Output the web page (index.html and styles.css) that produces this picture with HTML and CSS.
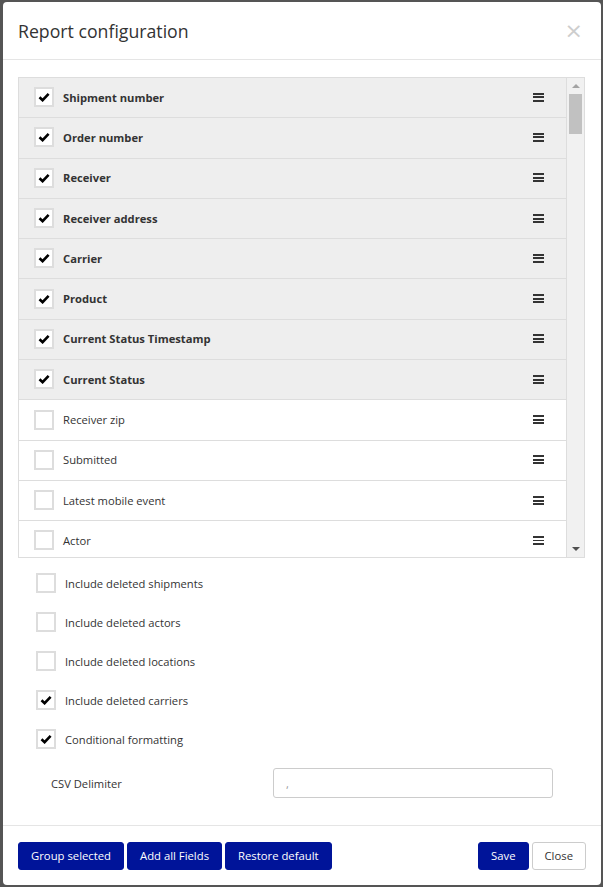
FILE: index.html
```html
<html>
  <head>
    <link rel="stylesheet" href="styles.css">
  </head>
  <body>
    <div class='modal'>
      <div class='modal-header'>
        <h4>Report configuration</h4>
        <span class='close-x'>&times;</span>
      </div>
      <div class='modal-body'>
        <div class='field-box'>
          <div class='field-list'>
            <div class='field-row checked'><span class='cb on'><svg viewBox='0 0 12 10'><path d='M1.5 5.2 L4.6 8.2 L10.6 1.8'/></svg></span><span class='name'>Shipment number</span><span class='handle'></span></div>
            <div class='field-row checked'><span class='cb on'><svg viewBox='0 0 12 10'><path d='M1.5 5.2 L4.6 8.2 L10.6 1.8'/></svg></span><span class='name'>Order number</span><span class='handle'></span></div>
            <div class='field-row checked'><span class='cb on'><svg viewBox='0 0 12 10'><path d='M1.5 5.2 L4.6 8.2 L10.6 1.8'/></svg></span><span class='name'>Receiver</span><span class='handle'></span></div>
            <div class='field-row checked'><span class='cb on'><svg viewBox='0 0 12 10'><path d='M1.5 5.2 L4.6 8.2 L10.6 1.8'/></svg></span><span class='name'>Receiver address</span><span class='handle'></span></div>
            <div class='field-row checked'><span class='cb on'><svg viewBox='0 0 12 10'><path d='M1.5 5.2 L4.6 8.2 L10.6 1.8'/></svg></span><span class='name'>Carrier</span><span class='handle'></span></div>
            <div class='field-row checked'><span class='cb on'><svg viewBox='0 0 12 10'><path d='M1.5 5.2 L4.6 8.2 L10.6 1.8'/></svg></span><span class='name'>Product</span><span class='handle'></span></div>
            <div class='field-row checked'><span class='cb on'><svg viewBox='0 0 12 10'><path d='M1.5 5.2 L4.6 8.2 L10.6 1.8'/></svg></span><span class='name'>Current Status Timestamp</span><span class='handle'></span></div>
            <div class='field-row checked'><span class='cb on'><svg viewBox='0 0 12 10'><path d='M1.5 5.2 L4.6 8.2 L10.6 1.8'/></svg></span><span class='name'>Current Status</span><span class='handle'></span></div>
            <div class='field-row'><span class='cb'></span><span class='name'>Receiver zip</span><span class='handle'></span></div>
            <div class='field-row'><span class='cb'></span><span class='name'>Submitted</span><span class='handle'></span></div>
            <div class='field-row'><span class='cb'></span><span class='name'>Latest mobile event</span><span class='handle'></span></div>
            <div class='field-row'><span class='cb'></span><span class='name'>Actor</span><span class='handle'></span></div>
          </div>
          <div class='scrollbar'>
            <span class='arrow up'></span>
            <div class='track'><div class='thumb'></div></div>
            <span class='arrow down'></span>
          </div>
        </div>
        <div class='options'>
          <div class='option'><span class='cb'></span>Include deleted shipments</div>
          <div class='option'><span class='cb'></span>Include deleted actors</div>
          <div class='option'><span class='cb'></span>Include deleted locations</div>
          <div class='option'><span class='cb on'><svg viewBox='0 0 12 10'><path d='M1.5 5.2 L4.6 8.2 L10.6 1.8'/></svg></span>Include deleted carriers</div>
          <div class='option'><span class='cb on'><svg viewBox='0 0 12 10'><path d='M1.5 5.2 L4.6 8.2 L10.6 1.8'/></svg></span>Conditional formatting</div>
        </div>
        <div class='delimiter'>
          <label for='csv-delim'>CSV Delimiter</label>
          <input type='text' id='csv-delim' value=','/>
        </div>
      </div>
      <div class='modal-footer'>
        <div class='left-btns'>
          <button class='btn primary'>Group selected</button>
          <button class='btn primary'>Add all Fields</button>
          <button class='btn primary'>Restore default</button>
        </div>
        <div class='right-btns'>
          <button class='btn primary'>Save</button>
          <button class='btn plain'>Close</button>
        </div>
      </div>
    </div>
  </body>
</html>
```

FILE: styles.css
```css
body {
  margin: 0;
  background: #555;
  font-family: "Open Sans", "Liberation Sans", sans-serif;
  color: #333;
}
.modal {
  margin: 2px 2px 2px 3px;
  height: 883px;
  background: #fff;
  border-radius: 4px;
  display: flex;
  flex-direction: column;
  box-sizing: border-box;
}
.modal-header {
  height: 57px;
  border-bottom: 1px solid #e5e5e5;
  display: flex;
  flex-direction: row;
  align-items: center;
  justify-content: space-between;
  padding: 0 18px 0 15px;
}
.modal-header h4 {
  margin: 0;
  font-size: 17.7px;
  font-weight: normal;
}
.close-x {
  color: #cdcdcd;
  font-size: 22px;
  font-family: "DejaVu Sans", sans-serif;
  line-height: 1;
}
.modal-body {
  flex: 1;
  padding: 17px 16px 0 15px;
}
.field-box {
  height: 479px;
  border: 1px solid #ddd;
  display: flex;
  flex-direction: row;
  overflow: hidden;
}
.field-list {
  flex: 1;
  border-right: 1px solid #ddd;
}
.field-row {
  height: 40.3px;
  box-sizing: border-box;
  border-bottom: 1px solid #ddd;
  display: flex;
  flex-direction: row;
  align-items: center;
  padding-left: 15px;
  padding-bottom: 1px;
  font-size: 11.2px;
}
.field-row.checked {
  background: #eee;
  font-weight: bold;
}
.cb {
  width: 20px;
  height: 20px;
  box-sizing: border-box;
  border: 2px solid #ddd;
  background: #fff;
  display: flex;
  align-items: center;
  justify-content: center;
  margin-right: 9px;
}
.cb svg {
  width: 12px;
  height: 10px;
  fill: none;
  stroke: #000;
  stroke-width: 2.6;
  stroke-linejoin: miter;
}
.field-row .name {
  flex: 1;
}
.handle {
  width: 11px;
  height: 9px;
  margin-right: 22px;
  background: linear-gradient(#333 0 2px, transparent 2px 3.5px, #333 3.5px 5.5px, transparent 5.5px 7px, #333 7px 9px);
}
.scrollbar {
  width: 17px;
  background: #f1f1f1;
  display: flex;
  flex-direction: column;
  align-items: center;
}
.arrow {
  width: 0;
  height: 0;
  border-left: 4px solid transparent;
  border-right: 4px solid transparent;
  margin: 6px 0;
}
.arrow.up {
  border-bottom: 4px solid #a3a3a3;
}
.arrow.down {
  border-top: 4px solid #505050;
}
.track {
  flex: 1;
  width: 100%;
  padding: 0 2px;
  box-sizing: border-box;
}
.thumb {
  height: 40px;
  background: #c1c1c1;
}
.options {
  padding: 15px 0 0 18px;
  display: flex;
  flex-direction: column;
  gap: 19px;
}
.option {
  display: flex;
  flex-direction: row;
  align-items: center;
  font-size: 11.2px;
  height: 20px;
}
.delimiter {
  display: flex;
  flex-direction: row;
  align-items: center;
  padding: 19px 0 0 33px;
  font-size: 11.2px;
}
.delimiter label {
  width: 222px;
}
.delimiter input {
  width: 280px;
  height: 30px;
  border: 1px solid #ccc;
  border-radius: 3px;
  color: #999;
  font-size: 11px;
  padding: 0 12px;
  box-sizing: border-box;
  font-family: inherit;
}
.modal-footer {
  border-top: 1px solid #e5e5e5;
  height: 59px;
  padding: 0 15px 0 15px;
  display: flex;
  flex-direction: row;
  align-items: center;
  justify-content: space-between;
}
.left-btns, .right-btns {
  display: flex;
  flex-direction: row;
  gap: 3px;
}
.btn {
  height: 28px;
  border-radius: 3px;
  font-family: inherit;
  font-size: 11.3px;
  padding: 0 12px;
  cursor: pointer;
}
.primary {
  background: #001499;
  color: #fff;
  border: 1px solid #001499;
}
.plain {
  background: #fff;
  color: #333;
  border: 1px solid #ccc;
}
```
